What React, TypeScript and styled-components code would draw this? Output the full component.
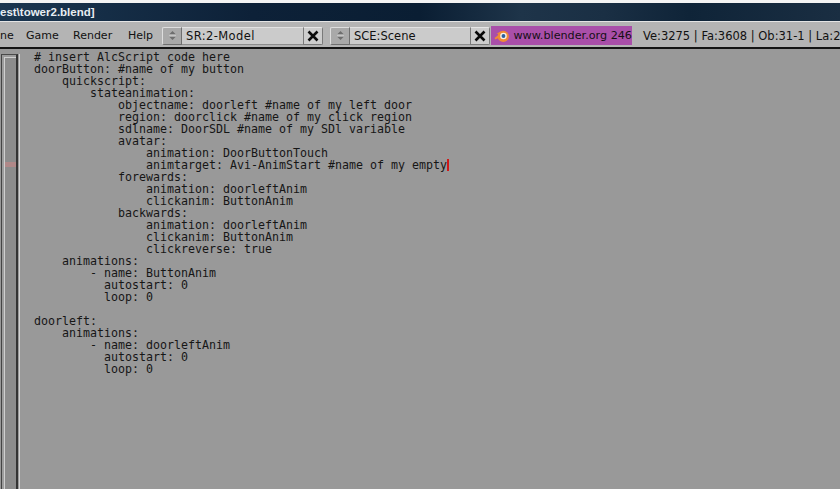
import styled, { createGlobalStyle } from "styled-components";

const GlobalStyle = createGlobalStyle`
  html, body {
    margin: 0;
    padding: 0;
    width: 840px;
    height: 489px;
    overflow: hidden;
    background: #999999;
  }
`;

const Screen = styled.div`
  width: 840px;
  height: 489px;
  display: flex;
  flex-direction: column;
  overflow: hidden;
`;

const TitleBar = styled.div`
  height: 18px;
  flex: none;
  display: flex;
  align-items: center;
  border-top: 3px solid #f4f4f4;
  background: linear-gradient(90deg, #1b3650 0%, #0d2138 30%, #0a1e33 50%, #1e3449 62%, #1a2f44 72%, #0f2438 82%, #1a2e42 100%);
  color: #e8edf2;
  font: bold 11.5px "Liberation Sans", sans-serif;
  white-space: nowrap;
`;

const Header = styled.div`
  height: 23px;
  padding-top: 2px;
  flex: none;
  display: flex;
  align-items: center;
  background: #b4b4b4;
  border-top: 1px solid #e4e4e4;
  border-bottom: 2px solid #141414;
  font: 11.5px "DejaVu Sans", sans-serif;
  color: #111;
  white-space: nowrap;
`;

const Menu = styled.div`
  display: flex;
  width: 162px;
  flex: none;
  font-size: 11px;
`;

const MenuItem = styled.span<{ $width: number }>`
  width: ${({ $width }) => $width}px;
`;

const Selector = styled.div<{ $width: number; $gap: number }>`
  width: ${({ $width }) => $width}px;
  height: 18px;
  flex: none;
  display: flex;
  margin-right: ${({ $gap }) => $gap}px;
`;

const Spinner = styled.div`
  width: 20px;
  flex: none;
  display: flex;
  align-items: center;
  justify-content: center;
  box-sizing: border-box;
  background: #a9a9a9;
  border: 1px solid #6f6f6f;
  border-top-color: #dedede;
  border-left-color: #dedede;
  border-radius: 2px 0 0 2px;
`;

const Field = styled.div<{ $tracking: number }>`
  flex: 1;
  padding-left: 4px;
  line-height: 16px;
  letter-spacing: ${({ $tracking }) => $tracking}px;
  background: #cbcbcb;
  border-top: 1px solid #e2e2e2;
  border-bottom: 1px solid #8c8c8c;
  box-sizing: border-box;
`;

const CloseButton = styled.div`
  width: 20px;
  flex: none;
  display: flex;
  align-items: center;
  justify-content: center;
  box-sizing: border-box;
  background: #cdcdcd;
  border: 1px solid #7a7a7a;
  border-top-color: #e6e6e6;
  border-radius: 0 2px 2px 0;
`;

const Banner = styled.div`
  width: 141px;
  height: 19px;
  flex: none;
  display: flex;
  align-items: center;
  gap: 4px;
  padding-left: 3px;
  box-sizing: border-box;
  font-size: 11.2px;
  background: #a94fa9;
  color: #151015;
`;

const Stats = styled.div`
  margin-left: 11px;
`;

const Body = styled.div`
  flex: 1;
  display: flex;
  min-height: 0;
`;

const ScrollGutter = styled.div`
  width: 20px;
  flex: none;
  margin-top: 5px;
  position: relative;
  box-sizing: border-box;
  border-left: 1px solid #999;
`;

const ScrollTrack = styled.div`
  width: 17px;
  height: 100%;
  box-sizing: border-box;
  background: #8c8c8c;
  border-top: 1px solid #4a4a4a;
  border-left: 1px solid #444;
  border-right: 2px solid #333;
  box-shadow: inset 2px 2px 0 #9c9c9c, inset 3px 3px 0 #cfcfcf, 1px 0 0 #999, 2px 0 0 #d2d2d2;
`;

const ErrorMark = styled.div`
  position: absolute;
  left: 4px;
  top: 108px;
  width: 11px;
  height: 5px;
  background: #b08888;
`;

const Code = styled.pre`
  margin: 0;
  padding: 2px 0 0 14px;
  font: 11.63px/12px "DejaVu Sans Mono", monospace;
  color: #161616;
`;

const Cursor = styled.span`
  display: inline-block;
  width: 2px;
  height: 12px;
  margin-bottom: -2px;
  background: #d01818;
`;

const codeBefore = `# insert AlcScript code here
doorButton: #name of my button
    quickscript:
        stateanimation:
            objectname: doorleft #name of my left door
            region: doorclick #name of my click region
            sdlname: DoorSDL #name of my SDl variable
            avatar:
                animation: DoorButtonTouch
                animtarget: Avi-AnimStart #name of my empty`;

const codeAfter = `
            forewards:
                animation: doorleftAnim
                clickanim: ButtonAnim
            backwards:
                animation: doorleftAnim
                clickanim: ButtonAnim
                clickreverse: true
    animations:
        - name: ButtonAnim
          autostart: 0
          loop: 0

doorleft:
    animations:
        - name: doorleftAnim
          autostart: 0
          loop: 0
`;

function SpinnerIcon() {
  return (
    <svg width="9" height="11" viewBox="0 0 9 11">
      <path d="M4.5 1 L7.5 4 H1.5 Z M4.5 10 L1.5 7 H7.5 Z" fill="#6e6e6e" />
      <path d="M1 5.5 H8" stroke="#c4c4c4" strokeWidth="1" />
    </svg>
  );
}

function CloseIcon() {
  return (
    <svg width="12" height="12" viewBox="0 0 12 12">
      <path d="M1.5 1.5 L10.5 10.5 M10.5 1.5 L1.5 10.5" stroke="#0a0a0a" strokeWidth="2.6" />
    </svg>
  );
}

function BlenderLogo() {
  return (
    <svg width="16" height="14" viewBox="0 0 16 14">
      <circle cx="9.6" cy="7.4" r="5.8" fill="#f08a35" />
      <path d="M0.5 9 L6 5 L2.5 4.6 L7 2.4 L10 4 L8 11 L4.5 9 L1.5 10.5 Z" fill="#f08a35" />
      <circle cx="9.8" cy="7" r="3.4" fill="#f6f1e8" />
      <circle cx="9.8" cy="7" r="2" fill="#2c5f9e" />
    </svg>
  );
}

export default function App() {
  return (
    <Screen>
      <GlobalStyle />
      <TitleBar>est\tower2.blend]</TitleBar>
      <Header>
        <Menu>
          <MenuItem $width={26}>ne</MenuItem>
          <MenuItem $width={47}>Game</MenuItem>
          <MenuItem $width={55}>Render</MenuItem>
          <MenuItem $width={34}>Help</MenuItem>
        </Menu>
        <Selector $width={161} $gap={7}>
          <Spinner>
            <SpinnerIcon />
          </Spinner>
          <Field $tracking={0.4}>SR:2-Model</Field>
          <CloseButton>
            <CloseIcon />
          </CloseButton>
        </Selector>
        <Selector $width={160} $gap={1}>
          <Spinner>
            <SpinnerIcon />
          </Spinner>
          <Field $tracking={0}>SCE:Scene</Field>
          <CloseButton>
            <CloseIcon />
          </CloseButton>
        </Selector>
        <Banner>
          <BlenderLogo />
          www.blender.org 246
        </Banner>
        <Stats>Ve:3275 | Fa:3608 | Ob:31-1 | La:2</Stats>
      </Header>
      <Body>
        <ScrollGutter>
          <ScrollTrack />
          <ErrorMark />
        </ScrollGutter>
        <Code>
          {codeBefore}
          <Cursor />
          {codeAfter}
        </Code>
      </Body>
    </Screen>
  );
}
